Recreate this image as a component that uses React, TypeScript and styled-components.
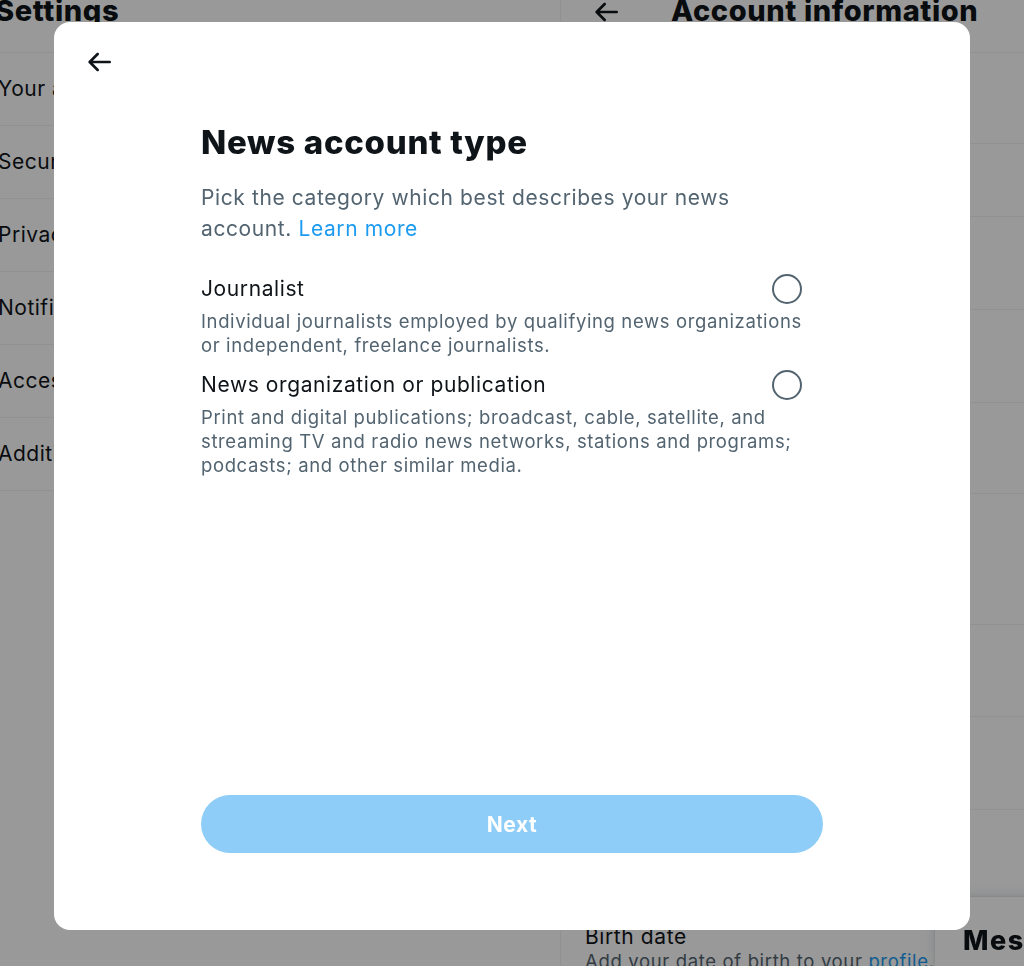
import React from "react";
import styled, { createGlobalStyle } from "styled-components";

const GlobalStyle = createGlobalStyle`
  html, body { margin: 0; padding: 0; }
  body {
    font-family: Inter, "Noto Sans", "Liberation Sans", sans-serif;
    background: #ffffff;
    color: #0f1419;
    overflow: hidden;
  }
  * { box-sizing: border-box; }
`;

const Page = styled.div`
  display: flex;
  width: 1042px;
  height: 966px;
  margin-left: -18px;
  overflow: hidden;
`;

const LeftColumn = styled.section`
  width: 579px;
  flex: none;
  border-right: 1px solid #eff3f4;
  display: flex;
  flex-direction: column;
`;

const RightColumn = styled.section`
  flex: 1;
  display: flex;
  flex-direction: column;
`;

const ColumnHeader = styled.header<{ $padLeft: number }>`
  height: 53px;
  flex: none;
  display: flex;
  align-items: flex-start;
  padding-left: ${(p) => p.$padLeft}px;
  border-bottom: 1px solid #eff3f4;
`;

const HeaderTitle = styled.h2<{ $gap?: number }>`
  margin: -6px 0 0 ${(p) => p.$gap ?? 0}px;
  font-size: 29px;
  line-height: 34px;
  font-weight: 800;
  letter-spacing: 0.6px;
  color: #0f1419;
  white-space: nowrap;
`;

const HeaderBack = styled.span`
  display: flex;
  width: 32px;
  height: 32px;
  margin-top: -4px;
  color: #0f1419;
`;

const MenuRow = styled.div`
  height: 73px;
  flex: none;
  display: flex;
  align-items: center;
  justify-content: space-between;
  padding: 0 24px 0 16px;
  border-bottom: 1px solid #eff3f4;
  font-size: 21px;
  line-height: 24px;
  letter-spacing: 0.5px;
  color: #0f1419;
  white-space: nowrap;
`;

const Chevron = styled.span`
  display: flex;
  width: 25px;
  height: 25px;
  color: #536471;
`;

const InfoRow = styled.div<{ $h: number }>`
  height: ${(p) => p.$h}px;
  flex: none;
  display: flex;
  flex-direction: column;
  padding: 23px 24px 0;
  border-bottom: 1px solid #eff3f4;
`;

const InfoLabel = styled.div`
  font-size: 21px;
  line-height: 24px;
  letter-spacing: 0.6px;
  color: #0f1419;
  white-space: nowrap;
`;

const InfoValue = styled.div`
  font-size: 18.5px;
  line-height: 24px;
  letter-spacing: 0.65px;
  color: #536471;
  white-space: nowrap;
`;

const InlineLink = styled.span`
  color: #1d9bf0;
`;

const Drawer = styled.aside`
  position: fixed;
  left: 935px;
  bottom: 0;
  width: 533px;
  height: 69px;
  background: #ffffff;
  border-radius: 21px 21px 0 0;
  box-shadow: rgba(101, 119, 134, 0.2) 0 0 15px, rgba(101, 119, 134, 0.15) 0 0 3px 1px;
  padding: 29px 0 0 28px;
  z-index: 5;
`;

const DrawerTitle = styled.h2`
  margin: 0;
  font-size: 27px;
  line-height: 30px;
  font-weight: 800;
  letter-spacing: 1.5px;
  color: #0f1419;
  white-space: nowrap;
`;

const Overlay = styled.div`
  position: fixed;
  inset: 0;
  background: rgba(0, 0, 0, 0.4);
  display: flex;
  justify-content: center;
  align-items: flex-start;
  padding-top: 22px;
  z-index: 10;
`;

const Modal = styled.div`
  width: 916px;
  height: 908px;
  background: #ffffff;
  border-radius: 16px;
  display: flex;
  flex-direction: column;
`;

const ModalHeader = styled.div`
  height: 56px;
  flex: none;
  display: flex;
  align-items: flex-start;
  padding: 24px 0 0 29px;
`;

const BackButton = styled.button`
  width: 32px;
  height: 32px;
  padding: 0;
  border: 0;
  background: transparent;
  color: #0f1419;
  display: flex;
  cursor: pointer;
`;

const ModalBody = styled.div`
  flex: 1;
  padding: 46px 147px 0;
  display: flex;
  flex-direction: column;
`;

const Title = styled.h1`
  margin: 0;
  font-size: 33px;
  line-height: 36px;
  font-weight: 800;
  letter-spacing: 0.7px;
  color: #0f1419;
`;

const Lead = styled.p`
  margin: 22px 0 0;
  max-width: 600px;
  font-size: 21px;
  line-height: 31px;
  letter-spacing: 0.6px;
  color: #536471;
`;

const LeadLink = styled.a`
  color: #1d9bf0;
  text-decoration: none;
`;

const OptionList = styled.div`
  margin-top: 30px;
  padding-right: 18px;
  display: flex;
  flex-direction: column;
  gap: 13px;
`;

const Option = styled.label`
  display: flex;
  flex-direction: column;
  gap: 5px;
  cursor: pointer;
`;

const OptionHead = styled.div`
  display: flex;
  align-items: center;
  justify-content: space-between;
`;

const OptionLabel = styled.span`
  font-size: 21px;
  line-height: 30px;
  letter-spacing: 0.6px;
  color: #0f1419;
`;

const Radio = styled.span`
  width: 30px;
  height: 30px;
  flex: none;
  margin-right: 3px;
  border: 2px solid #536471;
  border-radius: 50%;
`;

const OptionDesc = styled.span`
  font-size: 18.5px;
  line-height: 24px;
  letter-spacing: 0.62px;
  color: #536471;
`;

const ModalFooter = styled.div`
  flex: none;
  padding: 0 147px 77px;
`;

const NextButton = styled.button`
  width: 100%;
  height: 58px;
  border: 0;
  border-radius: 9999px;
  background: #8ecdf8;
  color: #ffffff;
  font-family: Inter, "Noto Sans", sans-serif;
  font-size: 21px;
  font-weight: 700;
  letter-spacing: 0.6px;
  cursor: default;
`;

const ArrowLeft = () => (
  <svg viewBox="0 0 24 24" width="100%" height="100%" fill="currentColor" aria-hidden="true">
    <path d="M20 11H7.414l4.293-4.293c.39-.39.39-1.023 0-1.414s-1.023-.39-1.414 0l-6 6c-.39.39-.39 1.023 0 1.414l6 6c.195.195.45.293.707.293s.512-.098.707-.293c.39-.39.39-1.023 0-1.414L7.414 13H20c.553 0 1-.447 1-1s-.447-1-1-1z" />
  </svg>
);

const ChevronRight = () => (
  <svg viewBox="0 0 24 24" width="100%" height="100%" fill="currentColor" aria-hidden="true">
    <path d="M14.586 12L7.543 4.96l1.414-1.42L17.414 12l-8.457 8.46-1.414-1.42L14.586 12z" />
  </svg>
);

const menu = [
  "Your account",
  "Security and account access",
  "Privacy and safety",
  "Notifications",
  "Accessibility, display, and languages",
  "Additional resources",
];

const info: { label: string; value: React.ReactNode; h: number }[] = [
  { label: "Username", value: "@newsdesk", h: 91 },
  { label: "Phone", value: "", h: 73 },
  { label: "Email", value: "newsdesk@example.com", h: 93 },
  { label: "Verified", value: "No. Request Verification", h: 93 },
  { label: "Protected Tweets", value: "No", h: 91 },
  { label: "Account creation", value: "Mar 3, 2012, 10:24:11 AM", h: 131 },
  { label: "Country", value: "United States", h: 92 },
  { label: "Languages", value: "English", h: 93 },
  { label: "Gender", value: "Male", h: 92 },
  {
    label: "Birth date",
    value: (
      <>
        Add your date of birth to your <InlineLink>profile</InlineLink>.
      </>
    ),
    h: 91,
  },
];

export default function App() {
  const [choice, setChoice] = React.useState<string | null>(null);
  return (
    <>
      <GlobalStyle />
      <Page>
        <LeftColumn>
          <ColumnHeader $padLeft={13}>
            <HeaderTitle>Settings</HeaderTitle>
          </ColumnHeader>
          {menu.map((m) => (
            <MenuRow key={m}>
              <span>{m}</span>
              <Chevron>
                <ChevronRight />
              </Chevron>
            </MenuRow>
          ))}
        </LeftColumn>
        <RightColumn>
          <ColumnHeader $padLeft={29}>
            <HeaderBack>
              <ArrowLeft />
            </HeaderBack>
            <HeaderTitle $gap={49}>Account information</HeaderTitle>
          </ColumnHeader>
          {info.map((r) => (
            <InfoRow key={r.label} $h={r.h}>
              <InfoLabel>{r.label}</InfoLabel>
              <InfoValue>{r.value}</InfoValue>
            </InfoRow>
          ))}
        </RightColumn>
      </Page>
      <Drawer>
        <DrawerTitle>Messages</DrawerTitle>
      </Drawer>
      <Overlay>
        <Modal role="dialog" aria-labelledby="news-title">
          <ModalHeader>
            <BackButton aria-label="Back">
              <ArrowLeft />
            </BackButton>
          </ModalHeader>
          <ModalBody>
            <Title id="news-title">News account type</Title>
            <Lead>
              Pick the category which best describes your news account.{" "}
              <LeadLink href="#">Learn more</LeadLink>
            </Lead>
            <OptionList>
              <Option onClick={() => setChoice("journalist")}>
                <OptionHead>
                  <OptionLabel>Journalist</OptionLabel>
                  <Radio />
                </OptionHead>
                <OptionDesc>
                  Individual journalists employed by qualifying news organizations or independent, freelance journalists.
                </OptionDesc>
              </Option>
              <Option onClick={() => setChoice("org")}>
                <OptionHead>
                  <OptionLabel>News organization or publication</OptionLabel>
                  <Radio />
                </OptionHead>
                <OptionDesc>
                  Print and digital publications; broadcast, cable, satellite, and streaming TV and radio news networks, stations and programs; podcasts; and other similar media.
                </OptionDesc>
              </Option>
            </OptionList>
          </ModalBody>
          <ModalFooter>
            <NextButton disabled={choice === null}>Next</NextButton>
          </ModalFooter>
        </Modal>
      </Overlay>
    </>
  );
}
